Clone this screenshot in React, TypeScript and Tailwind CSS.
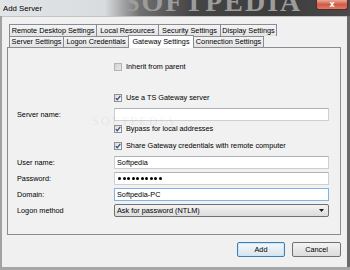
import React from "react";

const row1 = [
  { label: "Remote Desktop Settings", w: "w-[88px]" },
  { label: "Local Resources", w: "w-[62px]" },
  { label: "Security Settings", w: "w-[62px]" },
  { label: "Display Settings", w: "w-[56px]" },
];

const row2 = [
  { label: "Server Settings", w: "w-[55px]", sel: false },
  { label: "Logon Credentials", w: "w-[65px]", sel: false },
  { label: "Gateway Settings", w: "w-[66px]", sel: true },
  { label: "Connection Settings", w: "w-[70px]", sel: false },
];

function Tick() {
  return (
    <svg width="6" height="6" viewBox="0 0 6 6">
      <path d="M0.8 3.1 L2.3 4.8 L5.3 0.9" fill="none" stroke="#344a86" strokeWidth="1.3" />
    </svg>
  );
}

function CheckRow({ label, checked, disabled, className }: { label: string; checked?: boolean; disabled?: boolean; className: string }) {
  return (
    <div className={`flex items-center h-[12px] ${className}`}>
      <div className="w-[97px] shrink-0" />
      <div
        className={`w-[8px] h-[8px] border flex items-center justify-center ${
          disabled
            ? "border-[#b4b4b4] bg-linear-to-br from-[#d2d2d2] to-[#e8e8e8]"
            : "border-[#8e8f8f] bg-linear-to-br from-[#dadada] to-[#fafafa]"
        }`}
      >
        {checked && <Tick />}
      </div>
      <span className="ml-[4px] leading-none">{label}</span>
    </div>
  );
}

function FieldRow({ label, className, children }: { label: string; className: string; children: React.ReactNode }) {
  return (
    <div className={`flex items-center h-[13px] ${className}`}>
      <div className="w-[97px] shrink-0 leading-none">{label}</div>
      {children}
    </div>
  );
}

function Input({ value, focused, children }: { value?: string; focused?: boolean; children?: React.ReactNode }) {
  return (
    <div
      className={`flex-1 h-[13px] bg-white border flex items-center pl-[2px] leading-none ${
        focused ? "border-[#7eb4ea]" : "border-[#ccd0d5] border-t-[#b0b3ba]"
      }`}
    >
      {value}
      {children}
    </div>
  );
}

export default function App() {
  return (
    <div className="w-[350px] h-[270px] overflow-hidden flex flex-col font-['Liberation_Sans',Arial,sans-serif] text-[7.3px] text-black bg-[#f0f0f0]">
      {/* Title bar */}
      <div className="h-[16px] shrink-0 relative overflow-hidden flex bg-[linear-gradient(to_right,#e2e5e8_0%,#d9dcdf_30%,#707070_40%,#454545_55%,#3c3c3c_80%,#4a4a4a_100%)]">
        <div className="absolute left-[124px] top-[-12px] font-['Liberation_Serif',serif] font-bold text-[28px] leading-none tracking-[2px] text-[#9c9c9c] whitespace-nowrap">
          SOFTPEDIA
        </div>
        <div className="relative pl-[3px] pt-[3px] text-[7.8px] text-black leading-none h-full flex items-center pb-[2px]">Add Server</div>
        <div className="relative ml-auto mr-[2px] w-[32px] h-[10px] rounded-b-[3px] border border-t-0 border-[#5b2b22] bg-linear-to-b from-[#eba898] via-[#cf5a45] to-[#dc7c68] flex items-center justify-center">
          <span className="text-white font-bold text-[8px] leading-none font-['DejaVu_Sans',sans-serif]">x</span>
        </div>
      </div>

      {/* Body */}
      <div className="flex-1 flex min-h-0">
        <div className="w-[2px] bg-[#a2a2a2]" />
        <div className="flex-1 flex flex-col border-t border-[#c4c4c4] pt-[7px] pl-[5px] pr-[6px]">
          {/* Tabs row 1 */}
          <div className="flex h-[12px] ml-[2px]">
            {row1.map((t, i) => (
              <div
                key={t.label}
                className={`${t.w} h-full border-t border-r border-[#898c95] ${i === 0 ? "border-l" : ""} bg-linear-to-b from-[#f4f4f4] to-[#e3e3e3] flex items-center justify-center leading-none whitespace-nowrap`}
              >
                {t.label}
              </div>
            ))}
          </div>
          {/* Tabs row 2 */}
          <div className="flex items-end h-[11px] ml-[2px] relative z-10">
            {row2.map((t, i) =>
              t.sel ? (
                <div
                  key={t.label}
                  className={`${t.w} h-[13px] mb-[-1px] border-t border-r border-l border-[#898c95] -ml-px bg-white flex items-center justify-center leading-none whitespace-nowrap`}
                >
                  {t.label}
                </div>
              ) : (
                <div
                  key={t.label}
                  className={`${t.w} h-full border-t border-r border-[#898c95] ${i === 0 ? "border-l" : ""} bg-linear-to-b from-[#f4f4f4] to-[#e3e3e3] flex items-center justify-center leading-none whitespace-nowrap`}
                >
                  {t.label}
                </div>
              )
            )}
          </div>

          {/* Panel */}
          <div className="relative h-[188px] border border-[#898c95] bg-[#f1f1f1] flex flex-col pl-[9px] pr-[11px]">
            <div className="absolute left-[84px] top-[66px] font-['Liberation_Serif',serif] font-bold text-[13px] leading-none tracking-[1px] text-black/[0.05] whitespace-nowrap">
              SOFTPEDIA
            </div>
            <CheckRow label="Inherit from parent" disabled className="mt-[13px]" />
            <CheckRow label="Use a TS Gateway server" checked className="mt-[19px]" />
            <FieldRow label="Server name:" className="mt-[4px]">
              <Input />
            </FieldRow>
            <CheckRow label="Bypass for local addresses" checked className="mt-[2px]" />
            <CheckRow label="Share Gateway credentials with remote computer" checked className="mt-[5px]" />
            <FieldRow label="User name:" className="mt-[4px]">
              <Input value="Softpedia" />
            </FieldRow>
            <FieldRow label="Password:" className="mt-[3px]">
              <Input>
                <div className="flex gap-[1.5px] ml-[1px]">
                  {Array.from({ length: 10 }).map((_, i) => (
                    <div key={i} className="w-[3px] h-[3px] rounded-full bg-black" />
                  ))}
                </div>
              </Input>
            </FieldRow>
            <FieldRow label="Domain:" className="mt-[3px]">
              <Input value="Softpedia-PC" focused />
            </FieldRow>
            <FieldRow label="Logon method" className="mt-[3px]">
              <div className="flex-1 h-[13px] border border-[#707070] rounded-[2px] bg-linear-to-b from-[#f3f3f3] to-[#dcdcdc] flex items-center pl-[2px] pr-[4px] leading-none">
                <span>Ask for password (NTLM)</span>
                <svg className="ml-auto" width="5" height="3" viewBox="0 0 5 3">
                  <path d="M0 0 H5 L2.5 3 Z" fill="#1a1a1a" />
                </svg>
              </div>
            </FieldRow>
          </div>

          {/* Buttons */}
          <div className="flex justify-end gap-[7px] mt-[7px]">
            <div className="w-[48px] h-[15px] rounded-[2px] border border-[#3c7fb1] bg-linear-to-b from-[#f4f8fb] to-[#d9e4ee] flex items-center justify-center leading-none shadow-[inset_0_0_0_1px_#cde6f7]">
              Add
            </div>
            <div className="w-[49px] h-[15px] rounded-[2px] border border-[#707070] bg-linear-to-b from-[#f3f3f3] to-[#dcdcdc] flex items-center justify-center leading-none">
              Cancel
            </div>
          </div>
        </div>
        <div className="w-[3px] bg-[#6a6a6a]" />
      </div>
      <div className="h-[3px] shrink-0 bg-[#a6a6a6]" />
    </div>
  );
}
